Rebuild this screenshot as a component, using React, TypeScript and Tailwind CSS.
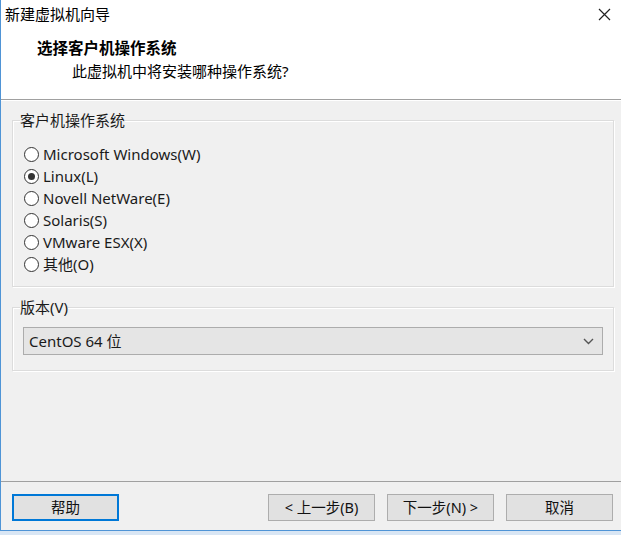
import React from "react";

const FONT = "font-['Noto_Sans','Noto_Sans_CJK_SC',sans-serif]";

const options = [
  { label: "Microsoft Windows(W)", checked: false },
  { label: "Linux(L)", checked: true },
  { label: "Novell NetWare(E)", checked: false },
  { label: "Solaris(S)", checked: false },
  { label: "VMware ESX(X)", checked: false },
  { label: "其他(O)", checked: false },
];

const Radio = ({ label, checked }: { label: string; checked: boolean }) => (
  <div className="flex h-[22px] items-center gap-[4px]">
    <span className="flex h-[15px] w-[15px] items-center justify-center rounded-full border border-[#333333] bg-white">
      {checked && <span className="h-[7px] w-[7px] rounded-full bg-[#333333]" />}
    </span>
    <span>{label}</span>
  </div>
);

const WizardButton = ({
  children,
  focused = false,
  className = "",
}: {
  children: React.ReactNode;
  focused?: boolean;
  className?: string;
}) => (
  <button
    className={
      "flex h-[27px] w-[107px] items-center justify-center bg-[#e1e1e1] text-[14.5px] text-[#111] " +
      (focused ? "border-2 border-[#0078d7] " : "border border-[#adadad] ") +
      className
    }
  >
    {children}
  </button>
);

export default function App() {
  return (
    <div
      className={`${FONT} flex h-[535px] w-[621px] flex-col overflow-hidden text-[15px] text-[#1a1a1a]`}
    >
      <div className="flex h-[530px] flex-col border-l border-[#4f94d6] bg-[#f0f0f0]">
        {/* title bar */}
        <div className="flex h-[28px] items-center justify-between bg-white pl-[4px] pr-[10px]">
          <span className="text-[15px] text-black">新建虚拟机向导</span>
          <svg width="13" height="13" viewBox="0 0 13 13" className="text-[#222]">
            <path d="M1 1 L12 12 M12 1 L1 12" stroke="currentColor" strokeWidth="1.2" />
          </svg>
        </div>

        {/* header */}
        <div className="flex h-[71px] flex-col bg-white pl-[36px] pt-[8px]">
          <span className="h-[24px] text-[15.5px] font-bold leading-[24px] text-black">
            选择客户机操作系统
          </span>
          <span className="ml-[35px] h-[22px] leading-[22px] text-black">
            此虚拟机中将安装哪种操作系统?
          </span>
        </div>
        <div className="h-px bg-[#a0a0a0]" />
        <div className="h-px bg-white" />

        {/* body */}
        <div className="flex flex-1 flex-col pt-[9px]">
          <fieldset className="ml-[11px] w-[602px] border border-[#dcdcdc] pb-[11px] pl-[7px] shadow-[inset_1px_1px_0_#ffffff,1px_1px_0_#ffffff]">
            <legend className="bg-[#f0f0f0] leading-[20px]">客户机操作系统</legend>
            <div className="ml-[4px] mt-[13px] flex flex-col">
              {options.map((o) => (
                <Radio key={o.label} label={o.label} checked={o.checked} />
              ))}
            </div>
          </fieldset>

          <fieldset className="ml-[11px] mt-[10px] w-[602px] border border-[#dcdcdc] pb-[15px] pl-[7px] shadow-[inset_1px_1px_0_#ffffff,1px_1px_0_#ffffff]">
            <legend className="bg-[#f0f0f0] leading-[20px]">版本(V)</legend>
            <div className="ml-[3px] mt-[10px] flex h-[28px] w-[580px] items-center justify-between border border-[#acacac] bg-[#e5e5e5] pl-[5px] pr-[8px]">
              <span>CentOS 64 位</span>
              <svg width="11" height="7" viewBox="0 0 11 7">
                <path d="M1 1 L5.5 5.5 L10 1" fill="none" stroke="#555" strokeWidth="1.4" />
              </svg>
            </div>
          </fieldset>

          <div className="flex-1" />

          <div className="h-px bg-[#a0a0a0]" />
          <div className="flex h-[48px] items-start pt-[12px]">
            <WizardButton focused className="ml-[11px]">
              帮助
            </WizardButton>
            <WizardButton className="ml-[149px]">&lt; 上一步(B)</WizardButton>
            <WizardButton className="ml-[12px]">下一步(N) &gt;</WizardButton>
            <WizardButton className="ml-[12px]">取消</WizardButton>
          </div>
        </div>
      </div>
      <div className="h-px bg-[#4f94d6]" />
      <div className="flex-1 bg-[#d9e6f4]" />
    </div>
  );
}
